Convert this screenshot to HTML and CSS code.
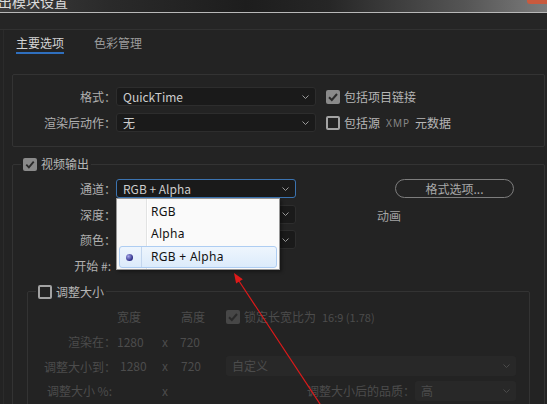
FILE: index.html
```html
<!DOCTYPE html>
<html lang="zh-CN">
<head>
<meta charset="utf-8">
<title>导出模块设置</title>
<link rel="stylesheet" href="styles.css">
</head>
<body>
<div class="window">
  <div class="titlebar"><span class="title">出模块设置</span><span class="close"></span></div>
  <div class="strip"></div>
  <div class="content">
    <div class="tabs"><span class="tab active">主要选项</span><span class="tab">色彩管理</span></div>

    <div class="box">
      <div class="form-grid">
        <span class="label">格式：</span>
        <div class="select"><span>QuickTime</span><svg class="chev" viewBox="0 0 7 4"><path d="M0.5 0.5 L3.5 3.5 L6.5 0.5" fill="none" stroke="#9a9a9a"/></svg></div>
        <div class="check"><span class="cb on"><svg viewBox="0 0 14 14"><path d="M3 7.2 L5.8 10 L11 4" fill="none" stroke="#2b2b2b" stroke-width="2"/></svg></span><span>包括项目链接</span></div>

        <span class="label">渲染后动作：</span>
        <div class="select"><span>无</span><svg class="chev" viewBox="0 0 7 4"><path d="M0.5 0.5 L3.5 3.5 L6.5 0.5" fill="none" stroke="#9a9a9a"/></svg></div>
        <div class="check"><span class="cb off"></span><span>包括源</span><span class="xmp">XMP</span><span>元数据</span></div>
      </div>
    </div>

    <div class="group">
      <div class="group-head"><span class="cb on small"><svg viewBox="0 0 14 14"><path d="M3 7.2 L5.8 10 L11 4" fill="none" stroke="#2b2b2b" stroke-width="2"/></svg></span><span>视频输出</span></div>
      <div class="video-grid">
        <span class="label">通道：</span>
        <div class="select focus"><span>RGB + Alpha</span><svg class="chev" viewBox="0 0 7 4"><path d="M0.5 0.5 L3.5 3.5 L6.5 0.5" fill="none" stroke="#9a9a9a"/></svg></div>
        <div class="btn">格式选项...</div>

        <span class="label">深度：</span>
        <div class="select"><span></span><svg class="chev" viewBox="0 0 7 4"><path d="M0.5 0.5 L3.5 3.5 L6.5 0.5" fill="none" stroke="#9a9a9a"/></svg></div>
        <span class="anim">动画</span>

        <span class="label">颜色：</span>
        <div class="select"><span></span><svg class="chev" viewBox="0 0 7 4"><path d="M0.5 0.5 L3.5 3.5 L6.5 0.5" fill="none" stroke="#9a9a9a"/></svg></div>
        <span></span>

        <span class="label start">开始 #:</span>
        <span></span>
        <span></span>
      </div>

      <div class="group resize">
        <div class="group-head"><span class="cb off"></span><span>调整大小</span></div>
        <div class="resize-grid">
          <span></span>
          <span class="pl1">宽度</span>
          <span></span>
          <span class="pl9">高度</span>
          <div class="lock"><span class="cb dis"><svg viewBox="0 0 14 14"><path d="M3 7.2 L5.8 10 L11 4" fill="none" stroke="#2a2a2a" stroke-width="2"/></svg></span><span>锁定长宽比为</span><span class="ratio">16:9 (1.78)</span></div>

          <span class="label">渲染在：</span>
          <span class="pl1">1280</span>
          <span class="xc">x</span>
          <span class="pl8">720</span>
          <span></span>

          <span class="label">调整大小到：</span>
          <span class="pl4">1280</span>
          <span class="xc">x</span>
          <span class="pl9">720</span>
          <div class="select dim wide"><span>自定义</span><svg class="chev" viewBox="0 0 7 4"><path d="M0.5 0.5 L3.5 3.5 L6.5 0.5" fill="none" stroke="#4a4a4a"/></svg></div>

          <span class="label pct">调整大小 %:</span>
          <span></span>
          <span class="xc">x</span>
          <span></span>
          <div class="quality"><span>调整大小后的品质：</span><div class="select dim q"><span>高</span><svg class="chev" viewBox="0 0 7 4"><path d="M0.5 0.5 L3.5 3.5 L6.5 0.5" fill="none" stroke="#4a4a4a"/></svg></div></div>
        </div>
      </div>
    </div>
  </div>

  <div class="popup">
    <div class="item">RGB</div>
    <div class="item">Alpha</div>
    <div class="item sel"><span class="bullet"></span><span class="sep"></span><span class="txt">RGB + Alpha</span></div>
  </div>

  <svg class="arrow" viewBox="0 0 547 404" width="547" height="404">
    <line x1="322" y1="407" x2="239" y2="281" stroke="#dd1a1a" stroke-width="1.2"/>
    <polygon points="234,273 236.1,283.6 242.8,279.2" fill="#dd1a1a"/>
  </svg>
</div>
</body>
</html>
```

FILE: styles.css
```css
* { box-sizing: border-box; }

body {
  margin: 0;
  width: 547px;
  height: 404px;
  overflow: hidden;
  background: #232323;
  font-family: "Noto Sans CJK SC", "Noto Sans", sans-serif;
  font-size: 12px;
  line-height: 16px;
  color: #b4b4b4;
}

.window {
  position: relative;
  width: 547px;
  height: 404px;
  overflow: hidden;
}

.titlebar {
  height: 13px;
  border-bottom: 1px solid #b8b8b8;
  background: linear-gradient(90deg, #3c3c3c 0%, #2a2a2a 20%, #1d1d1d 45%, #262626 60%, #555 85%, #7c7c7c 100%);
  display: flex;
  justify-content: space-between;
  align-items: flex-start;
  overflow: hidden;
}

.title {
  color: #dcdcdc;
  font-size: 14px;
  line-height: 14px;
  margin-top: -6px;
  margin-left: -2px;
}

.close {
  width: 20px;
  height: 4px;
  background: #c95a3e;
  border-radius: 0 0 0 3px;
}

.strip {
  height: 17px;
  background: #252525;
  border-bottom: 1px solid #313131;
}

.content {
  margin-left: 3px;
  border-left: 1px solid #2b2b2b;
  height: 374px;
}

.tabs {
  display: flex;
  gap: 30px;
  padding: 5px 0 0 12px;
}

.tab {
  line-height: 16px;
  padding-bottom: 1px;
  border-bottom: 2px solid transparent;
  color: #9c9c9c;
}

.tab.active {
  color: #d4d4d4;
  border-bottom-color: #2f6fbe;
}

.box {
  margin: 20px 2px 0 8px;
  border: 1px solid #333;
  border-radius: 2px;
  padding: 12px 0 14px 0;
}

.form-grid {
  display: grid;
  grid-template-columns: 103px 200px auto;
  grid-auto-rows: 19px;
  row-gap: 7px;
  align-items: center;
}

.label {
  text-align: right;
  color: #b0b0b0;
  line-height: 19px;
  white-space: nowrap;
}

.label.start { padding-right: 5px; }

.select {
  height: 19px;
  background: #1a1a1a;
  border: 1px solid #2d2d2d;
  border-radius: 3px;
  display: flex;
  align-items: center;
  justify-content: space-between;
  padding: 0 6px 0 6px;
  color: #cdcdcd;
}

.select.focus { border-color: #3b73b0; }

.chev { width: 7px; height: 4px; flex: none; }

.check {
  display: flex;
  align-items: center;
  gap: 4px;
  margin-left: 10px;
  color: #b6b6b6;
  white-space: nowrap;
}

.cb {
  width: 14px;
  height: 14px;
  border-radius: 2px;
  flex: none;
  display: flex;
}

.cb svg { width: 100%; height: 100%; }

.cb.on { background: #8a8a8a; }
.cb.small { width: 14px; height: 13px; }
.cb.off { border: 2px solid #a3a3a3; }
.cb.dis { background: #474747; }

.xmp {
  font-family: "Noto Sans", sans-serif;
  font-size: 10px;
  letter-spacing: 1px;
  color: #868686;
  margin: 0 1px 0 2px;
}

.group {
  margin: 17px 2px 0 8px;
  border: 1px solid #333;
  border-radius: 2px;
  height: 300px;
}

.group-head {
  display: flex;
  align-items: center;
  gap: 4px;
  width: max-content;
  height: 16px;
  margin: -9px 0 0 8px;
  padding: 0 2px;
  background: #232323;
  color: #b6b6b6;
}

.video-grid {
  display: grid;
  grid-template-columns: 103px 180px auto;
  grid-auto-rows: 19px;
  row-gap: 6.5px;
  margin-top: 7px;
  align-items: center;
}

.btn {
  margin-left: 99px;
  width: 119px;
  height: 19px;
  border: 1px solid #7d7d7d;
  border-radius: 10px;
  display: flex;
  align-items: center;
  justify-content: center;
  color: #a9a9a9;
}

.anim {
  padding-left: 81px;
  color: #a4a4a4;
  margin-top: 3px;
}

.group.resize {
  margin: 16.5px 14px 0 14px;
  height: 200px;
}

.group.resize .group-head { margin-top: -8px; }

.resize-grid {
  display: grid;
  grid-template-columns: 88px 42px 14px 54px 1fr;
  grid-auto-rows: 20px;
  row-gap: 4.5px;
  margin-top: 7px;
  align-items: center;
  color: #4c4c4c;
}

.resize-grid .label { color: #4c4c4c; }
.resize-grid .label.pct { padding-right: 4px; }

.pl1 { padding-left: 1px; }
.pl4 { padding-left: 4px; }
.pl8 { padding-left: 8px; }
.pl9 { padding-left: 9px; }

.xc { text-align: center; }

.lock {
  display: flex;
  align-items: center;
  gap: 4px;
  white-space: nowrap;
}

.ratio {
  font-size: 11px;
  margin-left: 2px;
}

.select.dim {
  background: #282828;
  border: none;
  color: #4c4c4c;
  height: 20px;
}

.select.wide { width: 290px; }
.select.q { width: 101px; }

.quality {
  display: flex;
  justify-content: flex-end;
  align-items: center;
  padding-right: 13px;
  white-space: nowrap;
}

.popup {
  position: absolute;
  left: 116px;
  top: 198px;
  width: 164px;
  height: 72px;
  border: 1px solid #979797;
  background: linear-gradient(90deg, #f7f7f7 0 29px, #e2e3e3 29px 30px, #ffffff 30px 31px, #fafafa 31px 100%);
  padding: 2px 2px 0 2px;
  font-family: "Noto Sans", sans-serif;
  font-size: 12px;
  letter-spacing: 0.3px;
  color: #111;
  box-shadow: 2px 2px 3px rgba(0, 0, 0, 0.35);
}

.item {
  height: 22px;
  display: flex;
  align-items: center;
  padding-left: 32px;
}

.item.sel {
  margin-top: 1px;
  padding-left: 0;
  border: 1px solid #aecdf2;
  border-radius: 3px;
  background: linear-gradient(#eef5fd, #dcebfb);
}

.bullet {
  width: 7px;
  height: 7px;
  margin-left: 6px;
  border-radius: 50%;
  background: radial-gradient(circle at 35% 35%, #a8a8ec, #2c2c86 70%);
  flex: none;
}

.sep {
  width: 1px;
  height: 20px;
  margin-left: 8px;
  background: #c3d6ee;
  flex: none;
}

.txt { margin-left: 9px; }

.arrow {
  position: absolute;
  left: 0;
  top: 0;
  pointer-events: none;
}
```
